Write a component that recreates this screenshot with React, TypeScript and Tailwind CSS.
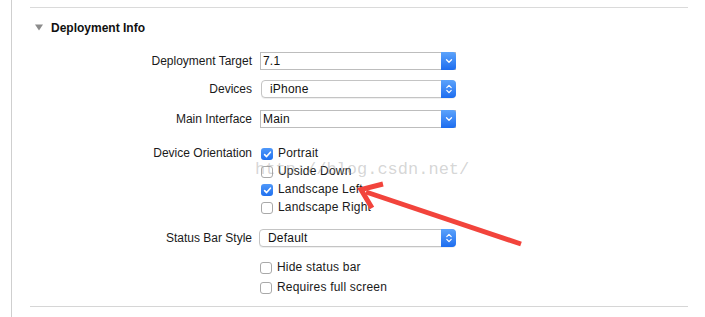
import React from "react";

const font = { fontFamily: "'Liberation Sans', Arial, sans-serif" };

function Check({ checked }: { checked?: boolean }) {
  if (checked) {
    return (
      <div className="w-[12px] h-[12px] rounded-[3px] bg-gradient-to-b from-[#4f98f9] to-[#1f70ef] flex items-center justify-center shrink-0">
        <svg width="9" height="9" viewBox="0 0 9 9">
          <path d="M1.6 4.6 L3.6 6.6 L7.4 2.2" fill="none" stroke="white" strokeWidth="1.6" strokeLinecap="round" strokeLinejoin="round" />
        </svg>
      </div>
    );
  }
  return <div className="w-[12px] h-[12px] rounded-[3px] border border-[#a9a9a9] bg-white shrink-0" />;
}

function CheckRow({ checked, label, h = "h-[18px]" }: { checked?: boolean; label: string; h?: string }) {
  return (
    <div className={`flex items-center ${h} pl-[1px]`}>
      <Check checked={checked} />
      <span className="ml-[5px] -mt-[2px] text-[12px] tracking-[0.2px] text-[#1a1a1a] leading-none">{label}</span>
    </div>
  );
}

function Combo({ value }: { value: string }) {
  return (
    <div className="flex w-[196px] h-[18px] border border-[#bdbdbd] bg-white">
      <div className="flex-1 flex items-center pl-[2px] text-[12px] tracking-[0.2px] text-[#111] leading-none">{value}</div>
      <div className="w-[15px] -my-[1px] -mr-[1px] rounded-r-[3px] bg-gradient-to-b from-[#5ca3fb] to-[#1c6cef] flex items-center justify-center">
        <svg width="8" height="6" viewBox="0 0 8 6">
          <path d="M1.5 1.8 L4 4.2 L6.5 1.8" fill="none" stroke="white" strokeWidth="1.3" strokeLinecap="round" strokeLinejoin="round" />
        </svg>
      </div>
    </div>
  );
}

function Popup({ value, w, pl }: { value: string; w: string; pl: string }) {
  return (
    <div className={`flex ${w} h-[18px] border border-[#c4c4c4] rounded-[4px] bg-white shadow-[0_1px_0_rgba(0,0,0,0.06)]`}>
      <div className={`flex-1 flex items-center ${pl} text-[12px] tracking-[0.2px] text-[#111] leading-none`}>{value}</div>
      <div className="w-[15px] -my-[1px] -mr-[1px] rounded-r-[4px] bg-gradient-to-b from-[#5ca3fb] to-[#1c6cef] flex items-center justify-center">
        <svg width="8" height="12" viewBox="0 0 8 12">
          <path d="M1.8 4.6 L4 2.4 L6.2 4.6" fill="none" stroke="white" strokeWidth="1.2" strokeLinecap="round" strokeLinejoin="round" />
          <path d="M1.8 7.4 L4 9.6 L6.2 7.4" fill="none" stroke="white" strokeWidth="1.2" strokeLinecap="round" strokeLinejoin="round" />
        </svg>
      </div>
    </div>
  );
}

function Label({ text }: { text: string }) {
  return (
    <div className="w-[223px] pr-[1px] text-right text-[12px] text-[#1a1a1a] leading-none shrink-0">{text}</div>
  );
}

export default function App() {
  return (
    <div className="w-[705px] h-[317px] bg-white relative overflow-hidden flex" style={font}>
      <div className="pl-[11px] flex">
        <div className="w-[1px] h-full bg-[#cfcfcf]" />
      </div>
      <div className="ml-[18px] w-[658px] flex flex-col">
        <div className="mt-[7px] h-[1px] bg-[#dadada]" />
        <div className="h-[39px] flex items-center">
          <svg width="8" height="7" viewBox="0 0 8 7" className="ml-[5px]">
            <path d="M0 0.5 L8 0.5 L4 6.5 Z" fill="#8c8c8c" />
          </svg>
          <span className="ml-[8px] text-[12px] font-bold text-[#111] leading-none">Deployment Info</span>
        </div>

        <div className="mt-[5px] flex items-center h-[18px]">
          <Label text="Deployment Target" />
          <div className="ml-[7px]"><Combo value="7.1" /></div>
        </div>
        <div className="mt-[10px] flex items-center h-[18px]">
          <Label text="Devices" />
          <div className="ml-[8px]"><Popup value="iPhone" w="w-[195px]" pl="pl-[8px]" /></div>
        </div>
        <div className="mt-[12px] flex items-center h-[18px]">
          <Label text="Main Interface" />
          <div className="ml-[7px]"><Combo value="Main" /></div>
        </div>

        <div className="mt-[17px] flex items-start">
          <div className="h-[15px] flex items-center"><Label text="Device Orientation" /></div>
          <div className="ml-[7px] flex flex-col">
            <CheckRow checked label="Portrait" />
            <CheckRow label="Upside Down" />
            <CheckRow checked label="Landscape Left" />
            <CheckRow label="Landscape Right" />
          </div>
        </div>

        <div className="mt-[12px] flex items-center h-[18px]">
          <Label text="Status Bar Style" />
          <div className="ml-[6px]"><Popup value="Default" w="w-[197px]" pl="pl-[8px]" /></div>
        </div>

        <div className="mt-[11px] ml-[229px] flex flex-col">
          <CheckRow label="Hide status bar" h="h-[20px]" />
          <CheckRow label="Requires full screen" h="h-[20px]" />
        </div>

        <div className="mt-[8px] h-[1px] bg-[#d6d6d6]" />
      </div>

      <div
        className="absolute left-[255px] top-[160px] text-[17px] leading-[20px] text-[rgba(150,150,150,0.4)] pointer-events-none"
        style={{ fontFamily: "'Liberation Mono', monospace" }}
      >
        http://blog.csdn.net/
      </div>

      <svg className="absolute left-0 top-0 pointer-events-none" width="705" height="317" viewBox="0 0 705 317">
        <line x1="366" y1="192" x2="521" y2="244" stroke="#f2443c" strokeWidth="5" />
        <polyline points="383,184 361,189.5 372,208" fill="none" stroke="#f2443c" strokeWidth="5" strokeLinejoin="miter" />
      </svg>
    </div>
  );
}
